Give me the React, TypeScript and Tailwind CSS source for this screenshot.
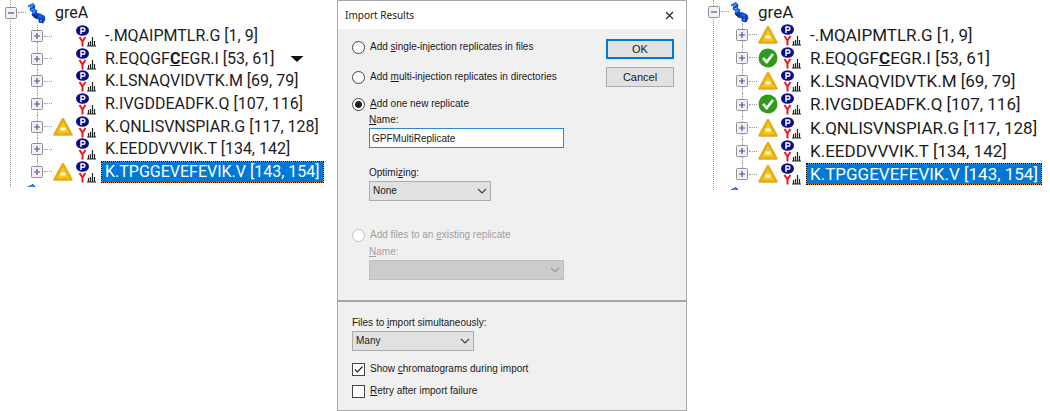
import React from "react";
import clsx from "clsx";

type Status = "none" | "warning" | "ok";

type Peptide = {
  text: React.ReactNode;
  status: Status;
  menu?: boolean;
  selected?: boolean;
};

const cysteine = (
  <>
    R.EQQGF<b className="underline">C</b>EGR.I [53, 61]
  </>
);

const before: Peptide[] = [
  { text: "-.MQAIPMTLR.G [1, 9]", status: "none" },
  { text: cysteine, status: "none", menu: true },
  { text: "K.LSNAQVIDVTK.M [69, 79]", status: "none" },
  { text: "R.IVGDDEADFK.Q [107, 116]", status: "none" },
  { text: "K.QNLISVNSPIAR.G [117, 128]", status: "warning" },
  { text: "K.EEDDVVVIK.T [134, 142]", status: "none" },
  { text: "K.TPGGEVEFEVIK.V [143, 154]", status: "warning", selected: true },
];

const after: Peptide[] = [
  { text: "-.MQAIPMTLR.G [1, 9]", status: "warning" },
  { text: cysteine, status: "ok" },
  { text: "K.LSNAQVIDVTK.M [69, 79]", status: "warning" },
  { text: "R.IVGDDEADFK.Q [107, 116]", status: "ok" },
  { text: "K.QNLISVNSPIAR.G [117, 128]", status: "warning" },
  { text: "K.EEDDVVVIK.T [134, 142]", status: "warning" },
  { text: "K.TPGGEVEFEVIK.V [143, 154]", status: "warning", selected: true },
];

function Expander({ open, label }: { open?: boolean; label: string }) {
  return (
    <button
      type="button"
      aria-label={label}
      className="block size-3 shrink-0 bg-white"
    >
      <svg viewBox="0 0 12 12" className="size-3">
        <rect x="0.5" y="0.5" width="11" height="11" rx="1" fill="#f1f1f1" stroke="#919191" />
        <path d={open ? "M3 6h6" : "M3 6h6M6 3v6"} stroke="#3c5a9c" strokeWidth="1.2" />
      </svg>
    </button>
  );
}

function ProteinIcon() {
  return (
    <svg viewBox="0 0 20 22" className="h-[22px] w-5 shrink-0">
      <path d="M1 4L6 1.500L8 4L7 7L10 9L9 11.500L13 12L17 14L18 17L16 21L12 20L12 17L8 16L5 13L6 10L3 8L4 5z" fill="#0a43c4" stroke="#0a43c4" strokeLinejoin="round" />
      <path d="M1 4l5-2.500 1 2-3 3zM5 9l3-1 1 2-3 2z" fill="#2b8cf5" />
      <path d="M12 12.500l4 1.500-1 2-4-1z" fill="#1a62ff" />
      <path d="M6 13l4 2M12 17.500l5 1" stroke="#06228a" strokeWidth="1.200" />
      <path d="M4 8l3-1M13 19l2-1" stroke="#7cc4ff" />
    </svg>
  );
}

function PeptideIcon() {
  return (
    <svg viewBox="0 0 20 22" className="h-[22px] w-5 shrink-0">
      <ellipse cx="6.5" cy="5.500" rx="6.500" ry="5.300" fill="#0b0f86" />
      <path d="M5 9V3h2.300a1.600 1.600 0 0 1 0 3.300H5" fill="none" stroke="#fff" strokeWidth="1.400" />
      <path d="M3.500 12l3 4.500 3-4.500M6.500 16v5.500" fill="none" stroke="#f0141e" strokeWidth="2" />
      <path d="M11 21h9M12.500 21v-4M14.500 21v-5M16.500 21v-9M18.500 21v-5" stroke="#222" strokeWidth="1.200" />
    </svg>
  );
}

function StatusIcon({ status }: { status: Status }) {
  return (
    <svg viewBox="0 0 20 20" className="size-5 shrink-0">
      {status === "warning" && (
        <>
          <path d="M10 2L18.500 17.500H1.500z" fill="#f9c712" stroke="#e3ab1c" strokeWidth="2.500" strokeLinejoin="round" />
          <rect x="7.500" y="10.500" width="5" height="3" fill="#fffbe8" />
        </>
      )}
      {status === "ok" && (
        <>
          <circle cx="10" cy="10" r="9.500" fill="#2f9a1c" />
          <path d="M5 10l3.700 4 6.300-8" fill="none" stroke="#fff" strokeWidth="2.600" />
        </>
      )}
    </svg>
  );
}

function PeptideRow({ peptide, last }: { peptide: Peptide; last: boolean }) {
  return (
    <li className="flex min-h-0 items-center">
      <div className="flex w-3 flex-col items-center self-stretch">
        <span className="w-px flex-1 border-l border-dotted border-[#999]" />
        <Expander label="Expand peptide" />
        <span
          className={clsx(
            "w-px flex-1 border-l border-dotted",
            last ? "border-transparent" : "border-[#999]",
          )}
        />
      </div>
      <span className="mx-px w-2 border-t border-dotted border-[#999]" />
      <StatusIcon status={peptide.status} />
      <span className="mr-[5px] ml-[3px]">
        <PeptideIcon />
      </span>
      {peptide.selected ? (
        <span className="border border-dotted border-black bg-[#f08a2c]">
          <span className="block bg-[#0078d7] px-[3px] leading-5 whitespace-nowrap text-white">
            {peptide.text}
          </span>
        </span>
      ) : (
        <span className="px-1 leading-5 whitespace-nowrap">{peptide.text}</span>
      )}
      {peptide.menu && (
        <svg viewBox="0 0 14 6" className="ml-3 h-[6px] w-[14px]">
          <path d="M0.500 0h13L7 6z" fill="#111" />
        </svg>
      )}
    </li>
  );
}

function PeptideTree({
  peptides,
  className,
  headClass,
  listClass,
}: {
  peptides: Peptide[];
  className: string;
  headClass: string;
  listClass: string;
}) {
  return (
    <section
      className={clsx(
        "self-start border-l border-dotted border-[#999] font-['Roboto',sans-serif] text-[#1c1c1c]",
        className,
      )}
    >
      <div className={clsx("-ml-[6px] flex items-center", headClass)}>
        <Expander open label="Collapse protein" />
        <span className="mx-px w-2 border-t border-dotted border-[#999]" />
        <ProteinIcon />
        <span className="ml-2 leading-5">greA</span>
      </div>
      <ul className={clsx("grid grid-rows-7", listClass)}>
        {peptides.map((p, i) => (
          <PeptideRow key={i} peptide={p} last={i === peptides.length - 1} />
        ))}
      </ul>
      <div className="ml-4 h-1 overflow-hidden">
        <ProteinIcon />
      </div>
    </section>
  );
}

function Chevron() {
  return (
    <svg
      viewBox="0 0 10 6"
      className="pointer-events-none absolute top-[7px] right-1 h-[6px] w-[10px]"
    >
      <path d="M1 1l4 4 4-4" fill="none" stroke="currentColor" strokeWidth="1.200" />
    </svg>
  );
}

function Combo({
  id,
  options,
  disabled,
  className,
}: {
  id: string;
  options: string[];
  disabled?: boolean;
  className: string;
}) {
  return (
    <div
      className={clsx(
        "relative",
        disabled ? "text-[#9a9a9a]" : "text-[#444]",
        className,
      )}
    >
      <select
        id={id}
        disabled={disabled}
        className="block h-5 w-full appearance-none border border-[#adadad] bg-[#e1e1e1] px-[3px] leading-4 text-[#1a1a1a] disabled:border-[#bfbfbf] disabled:bg-[#ccc] disabled:opacity-100"
      >
        {options.map((o) => (
          <option key={o}>{o}</option>
        ))}
      </select>
      <Chevron />
    </div>
  );
}

function Radio({
  children,
  checked,
  disabled,
}: {
  children: React.ReactNode;
  checked?: boolean;
  disabled?: boolean;
}) {
  return (
    <label
      className={clsx("flex h-4 items-center gap-[5px]", disabled && "text-[#a0a0a0]")}
    >
      <input
        type="radio"
        name="target"
        defaultChecked={checked}
        disabled={disabled}
        className="size-[13px] shrink-0 appearance-none rounded-full border border-[#444] bg-white checked:bg-[radial-gradient(circle,#222_3px,#fff_4px)] disabled:border-[#c4c4c4]"
      />
      <span>{children}</span>
    </label>
  );
}

function CheckBox({
  children,
  checked,
}: {
  children: React.ReactNode;
  checked?: boolean;
}) {
  return (
    <label className="flex h-4 items-center gap-[5px]">
      <span className="relative">
        <input
          type="checkbox"
          defaultChecked={checked}
          className="peer block size-[13px] appearance-none border border-[#444] bg-white"
        />
        <svg
          viewBox="0 0 13 13"
          className="pointer-events-none absolute inset-0 hidden size-[13px] peer-checked:block"
        >
          <path d="M3 6.500l2.500 2.500 5-5.500" fill="none" stroke="#222" strokeWidth="1.200" />
        </svg>
      </span>
      <span>{children}</span>
    </label>
  );
}

function ImportDialog() {
  return (
    <form className="border border-[#a8a8a8] bg-[#f0f0f0] font-['Liberation_Sans',sans-serif] text-[10px] leading-4 text-[#1a1a1a]">
      <header className="flex h-7 items-center justify-between bg-white pr-3 pl-[7px]">
        <h1 className="font-['Noto_Sans',sans-serif]">Import Results</h1>
        <button type="button" aria-label="Close">
          <svg viewBox="0 0 9 9" className="size-[9px]">
            <path d="M1 1l7 7M8 1L1 8" stroke="#222" strokeWidth="1.100" />
          </svg>
        </button>
      </header>

      <div className="flex justify-between border-b-2 border-[#a6a6a6] pt-[10px] pr-3 pb-5 pl-[14px]">
        <div>
          <Radio>
            Add <u>s</u>ingle-injection replicates in files
          </Radio>
          <div className="mt-[14px]">
            <Radio>
              Add <u>m</u>ulti-injection replicates in directories
            </Radio>
          </div>
          <div className="mt-[11px]">
            <Radio checked>
              <u>A</u>dd one new replicate
            </Radio>
          </div>
          <div className="ml-[17px] w-[195px]">
            <label htmlFor="name" className="block">
              <u>N</u>ame:
            </label>
            <input
              id="name"
              defaultValue="GPFMultiReplicate"
              className="block h-5 w-full border border-[#2f86d6] bg-white px-[2px] outline-none"
            />
            <label htmlFor="optimizing" className="mt-[17px] block">
              Optimi<u>z</u>ing:
            </label>
            <Combo id="optimizing" options={["None"]} className="w-[122px]" />
          </div>
          <div className="mt-[26px]">
            <Radio disabled>
              Add files to an <u>e</u>xisting replicate
            </Radio>
          </div>
          <div className="mt-px ml-[17px] w-[195px]">
            <label htmlFor="existing" className="block text-[#a0a0a0]">
              <u>N</u>ame:
            </label>
            <Combo id="existing" options={[""]} disabled className="w-full" />
          </div>
        </div>
        <div className="flex w-[68px] flex-col gap-2 text-[11px]">
          <button type="submit" className="h-5 border-2 border-[#0078d7] bg-[#e1e1e1] leading-4">
            OK
          </button>
          <button type="button" className="h-5 border border-[#adadad] bg-[#e1e1e1]">
            Cancel
          </button>
        </div>
      </div>

      <div className="px-[14px] pt-[13px] pb-[11px]">
        <label htmlFor="files" className="block">
          Files to <u>i</u>mport simultaneously:
        </label>
        <Combo id="files" options={["Many"]} className="w-[122px]" />
        <div className="mt-[10px] grid gap-[6px]">
          <CheckBox checked>
            Show <u>c</u>hromatograms during import
          </CheckBox>
          <CheckBox>
            <u>R</u>etry after import failure
          </CheckBox>
        </div>
      </div>
    </form>
  );
}

function App() {
  return (
    <main className="grid grid-cols-[337fr_350fr_363fr] bg-white">
      <PeptideTree
        peptides={before}
        className="ml-[10px] text-[16px]"
        headClass="h-[25px]"
        listClass="ml-5 h-[158px]"
      />
      <ImportDialog />
      <PeptideTree
        peptides={after}
        className="ml-[26px] text-[17px]"
        headClass="h-[23px]"
        listClass="ml-[22px] h-[163px]"
      />
    </main>
  );
}

export default App;
